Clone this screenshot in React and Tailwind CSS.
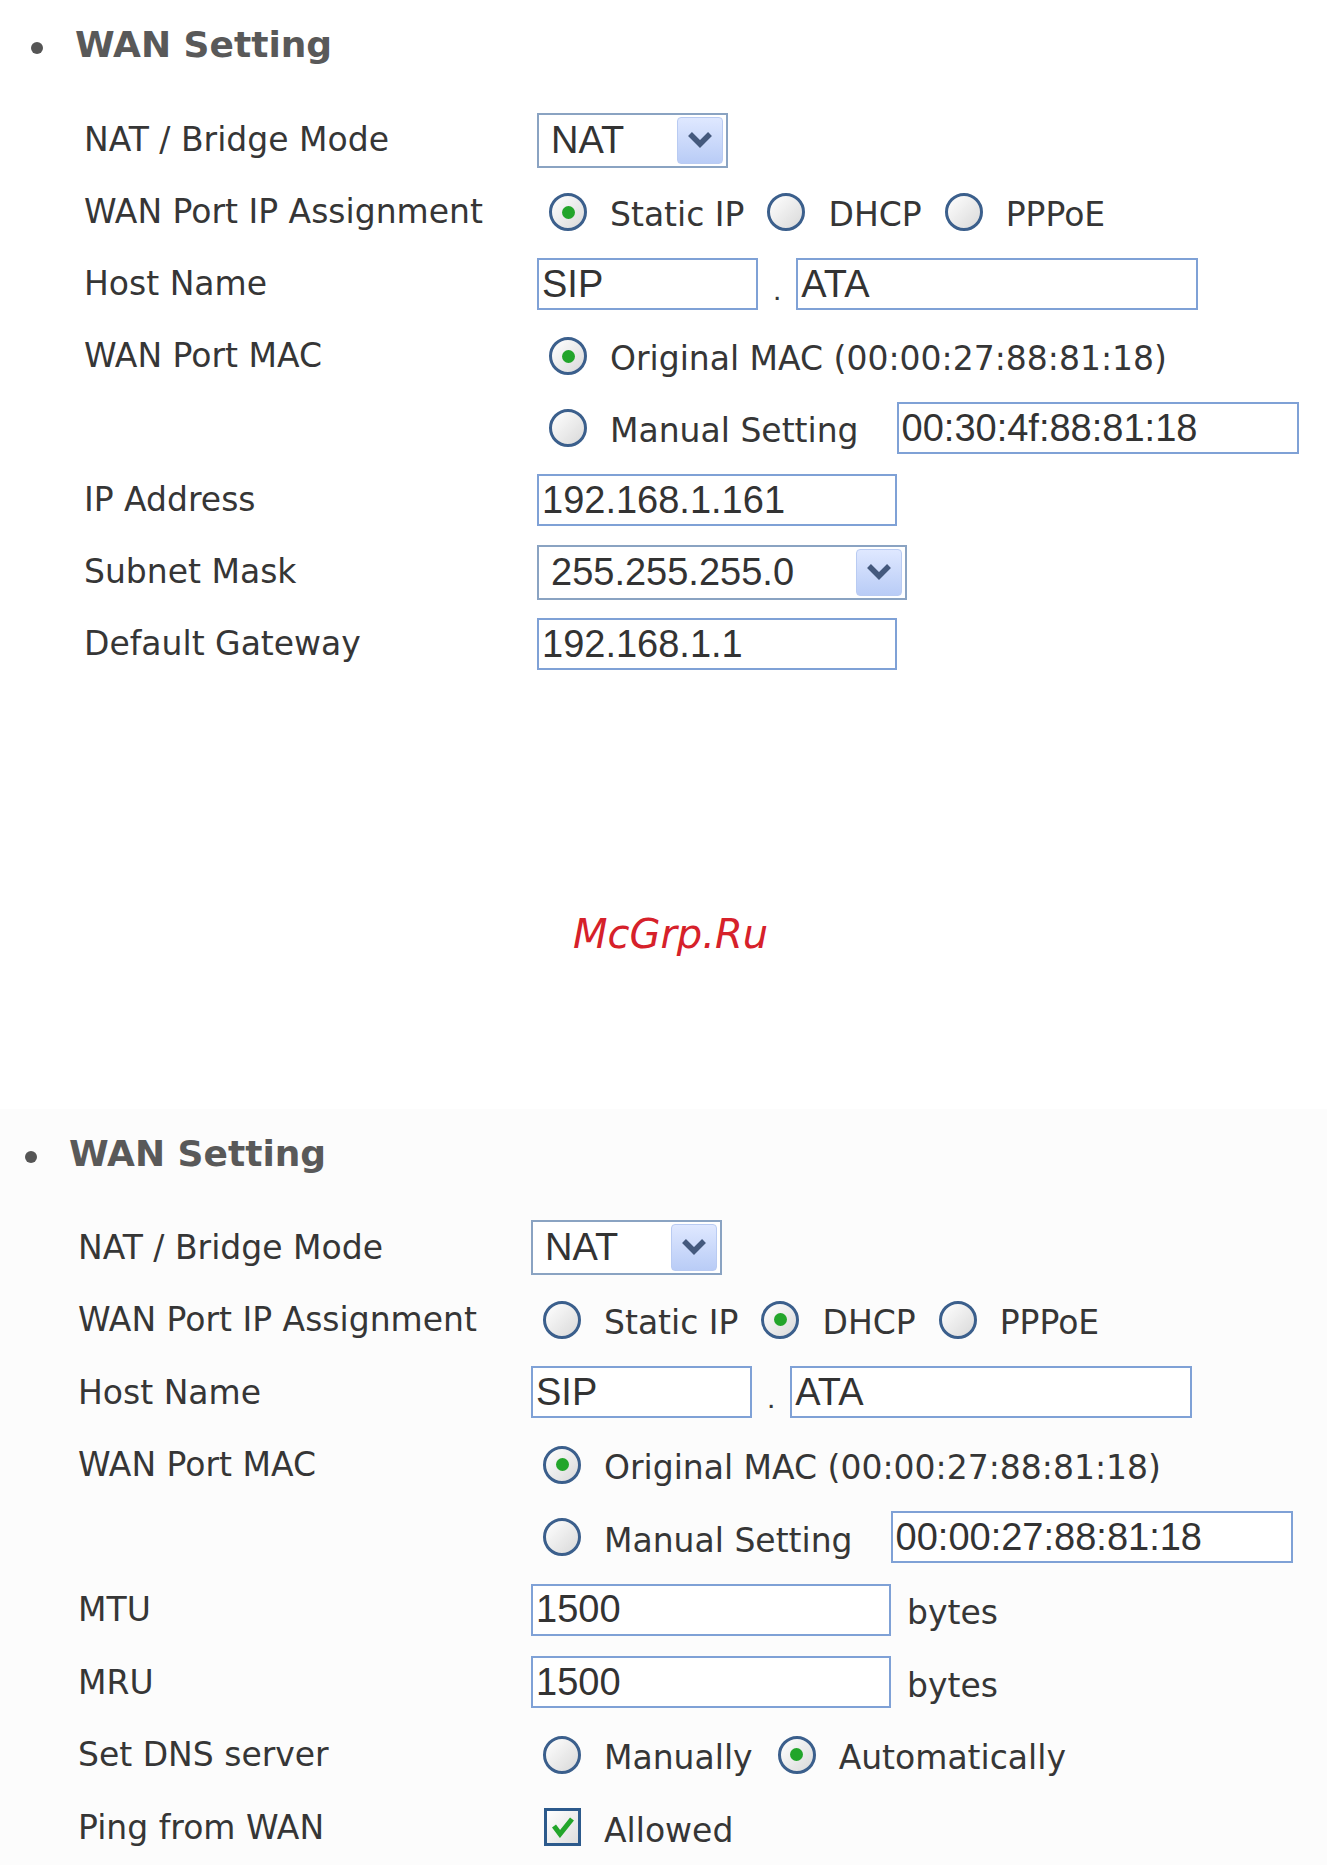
import React from 'react'

const Radio = ({ checked }) => (
    <span className="inline-flex h-[38px] w-[38px] shrink-0 items-center justify-center rounded-full border-[3px] border-[#3b5f8c] bg-linear-to-br from-white to-[#d9d9d9]">
        {checked && <span className="h-[13px] w-[13px] rounded-full bg-[#22a52a]" />}
    </span>
)

const Option = ({ checked, children }) => (
    <span className="flex items-center">
        <Radio checked={checked} />
        <span className="ml-[23px] pt-[6px]">{children}</span>
    </span>
)

const TextBox = ({ value, width }) => (
    <input
        readOnly
        value={value}
        className={`h-[52px] border-2 border-[#7fa1d6] bg-white pl-[3px] font-['Liberation_Sans',Arial,sans-serif] text-[38px] text-[#333] outline-none ${width}`}
    />
)

const Select = ({ value, width }) => (
    <div className={`flex h-[55px] items-center justify-between border-2 border-[#8aa3c2] bg-white pl-[12px] pr-[3px] font-['Liberation_Sans',Arial,sans-serif] text-[38px] text-[#333] ${width}`}>
        <span>{value}</span>
        <span className="flex h-[47px] w-[46px] items-center justify-center rounded-[4px] border border-[#b9cbf2] bg-linear-to-b from-[#dfe8ff] to-[#b9ccf6]">
            <svg width="26" height="18" viewBox="0 0 26 18">
                <path d="M3 3 L13 13 L23 3" fill="none" stroke="#44597d" strokeWidth="5.5" />
            </svg>
        </span>
    </div>
)

const Row = ({ label, children, h = 'h-[72px]' }) => (
    <div className={`flex items-center ${h}`}>
        <div className="w-[453px] shrink-0">{label}</div>
        <div className="flex items-center">{children}</div>
    </div>
)

const Heading = () => (
    <div className="flex h-[50px] items-center pl-[25px]">
        <span className="mt-[6px] h-[12px] w-[12px] rounded-full bg-[#555]" />
        <h2 className="ml-[32px] text-[36px] font-bold text-[#595959]">WAN Setting</h2>
    </div>
)

const Checkbox = () => (
    <span className="flex h-[38px] w-[37px] items-center justify-center border-[3px] border-[#2c5a8c] bg-linear-to-br from-white to-[#dedede]">
        <svg width="24" height="22" viewBox="0 0 24 22">
            <path d="M3 10 L9 18 L21 3" fill="none" stroke="#22a52a" strokeWidth="5" />
        </svg>
    </span>
)

const Dot = () => (
    <span className="mx-[15px] pt-[10px] font-['Liberation_Sans',Arial,sans-serif] text-[30px]">.</span>
)

const App = () => {
    const h2 = 'h-[72.5px]'
    return (
        <div className="h-[1865px] w-[1327px] overflow-hidden bg-white font-['DejaVu_Sans',Verdana,sans-serif] text-[33px] text-[#363636]">
            {/* first screen: static IP */}
            <section className="pl-[6px] pt-[20px]">
                <Heading />
                <div className="mt-[34px] pl-[78px]">
                    <Row label="NAT / Bridge Mode">
                        <Select value="NAT" width="w-[191px]" />
                    </Row>
                    <Row label="WAN Port IP Assignment">
                        <div className="ml-[12px] flex items-center gap-[23px]">
                            <Option checked>Static IP</Option>
                            <Option>DHCP</Option>
                            <Option>PPPoE</Option>
                        </div>
                    </Row>
                    <Row label="Host Name">
                        <TextBox value="SIP" width="w-[221px]" />
                        <Dot />
                        <TextBox value="ATA" width="w-[402px]" />
                    </Row>
                    <Row label="WAN Port MAC">
                        <div className="ml-[12px]">
                            <Option checked>Original MAC (00:00:27:88:81:18)</Option>
                        </div>
                    </Row>
                    <Row label="">
                        <div className="ml-[12px] flex items-center">
                            <Option>Manual Setting</Option>
                            <span className="ml-[38px]">
                                <TextBox value="00:30:4f:88:81:18" width="w-[402px]" />
                            </span>
                        </div>
                    </Row>
                    <Row label="IP Address">
                        <TextBox value="192.168.1.161" width="w-[360px]" />
                    </Row>
                    <Row label="Subnet Mask">
                        <Select value="255.255.255.0" width="w-[370px]" />
                    </Row>
                    <Row label="Default Gateway">
                        <TextBox value="192.168.1.1" width="w-[360px]" />
                    </Row>
                </div>
            </section>

            <div className="h-[429px] pt-[229px] text-center">
                <p className="pl-[14px] text-[40px] italic leading-[50px] text-[#d6212a]">McGrp.Ru</p>
            </div>

            {/* second screen: DHCP */}
            <section className="h-full bg-[#fcfcfc] pt-[20px]">
                <Heading />
                <div className="mt-[32px] pl-[78px]">
                    <Row h={h2} label="NAT / Bridge Mode">
                        <Select value="NAT" width="w-[191px]" />
                    </Row>
                    <Row h={h2} label="WAN Port IP Assignment">
                        <div className="ml-[12px] flex items-center gap-[23px]">
                            <Option>Static IP</Option>
                            <Option checked>DHCP</Option>
                            <Option>PPPoE</Option>
                        </div>
                    </Row>
                    <Row h={h2} label="Host Name">
                        <TextBox value="SIP" width="w-[221px]" />
                        <Dot />
                        <TextBox value="ATA" width="w-[402px]" />
                    </Row>
                    <Row h={h2} label="WAN Port MAC">
                        <div className="ml-[12px]">
                            <Option checked>Original MAC (00:00:27:88:81:18)</Option>
                        </div>
                    </Row>
                    <Row h={h2} label="">
                        <div className="ml-[12px] flex items-center">
                            <Option>Manual Setting</Option>
                            <span className="ml-[38px]">
                                <TextBox value="00:00:27:88:81:18" width="w-[402px]" />
                            </span>
                        </div>
                    </Row>
                    <Row h={h2} label="MTU">
                        <TextBox value="1500" width="w-[360px]" />
                        <span className="ml-[16px] pt-[6px]">bytes</span>
                    </Row>
                    <Row h={h2} label="MRU">
                        <TextBox value="1500" width="w-[360px]" />
                        <span className="ml-[16px] pt-[6px]">bytes</span>
                    </Row>
                    <Row h={h2} label="Set DNS server">
                        <div className="ml-[12px] flex items-center gap-[25px]">
                            <Option>Manually</Option>
                            <Option checked>Automatically</Option>
                        </div>
                    </Row>
                    <Row h={h2} label="Ping from WAN">
                        <div className="ml-[13px] flex items-center">
                            <Checkbox />
                            <span className="ml-[23px] pt-[6px]">Allowed</span>
                        </div>
                    </Row>
                </div>
            </section>
        </div>
    )
}

export default App
